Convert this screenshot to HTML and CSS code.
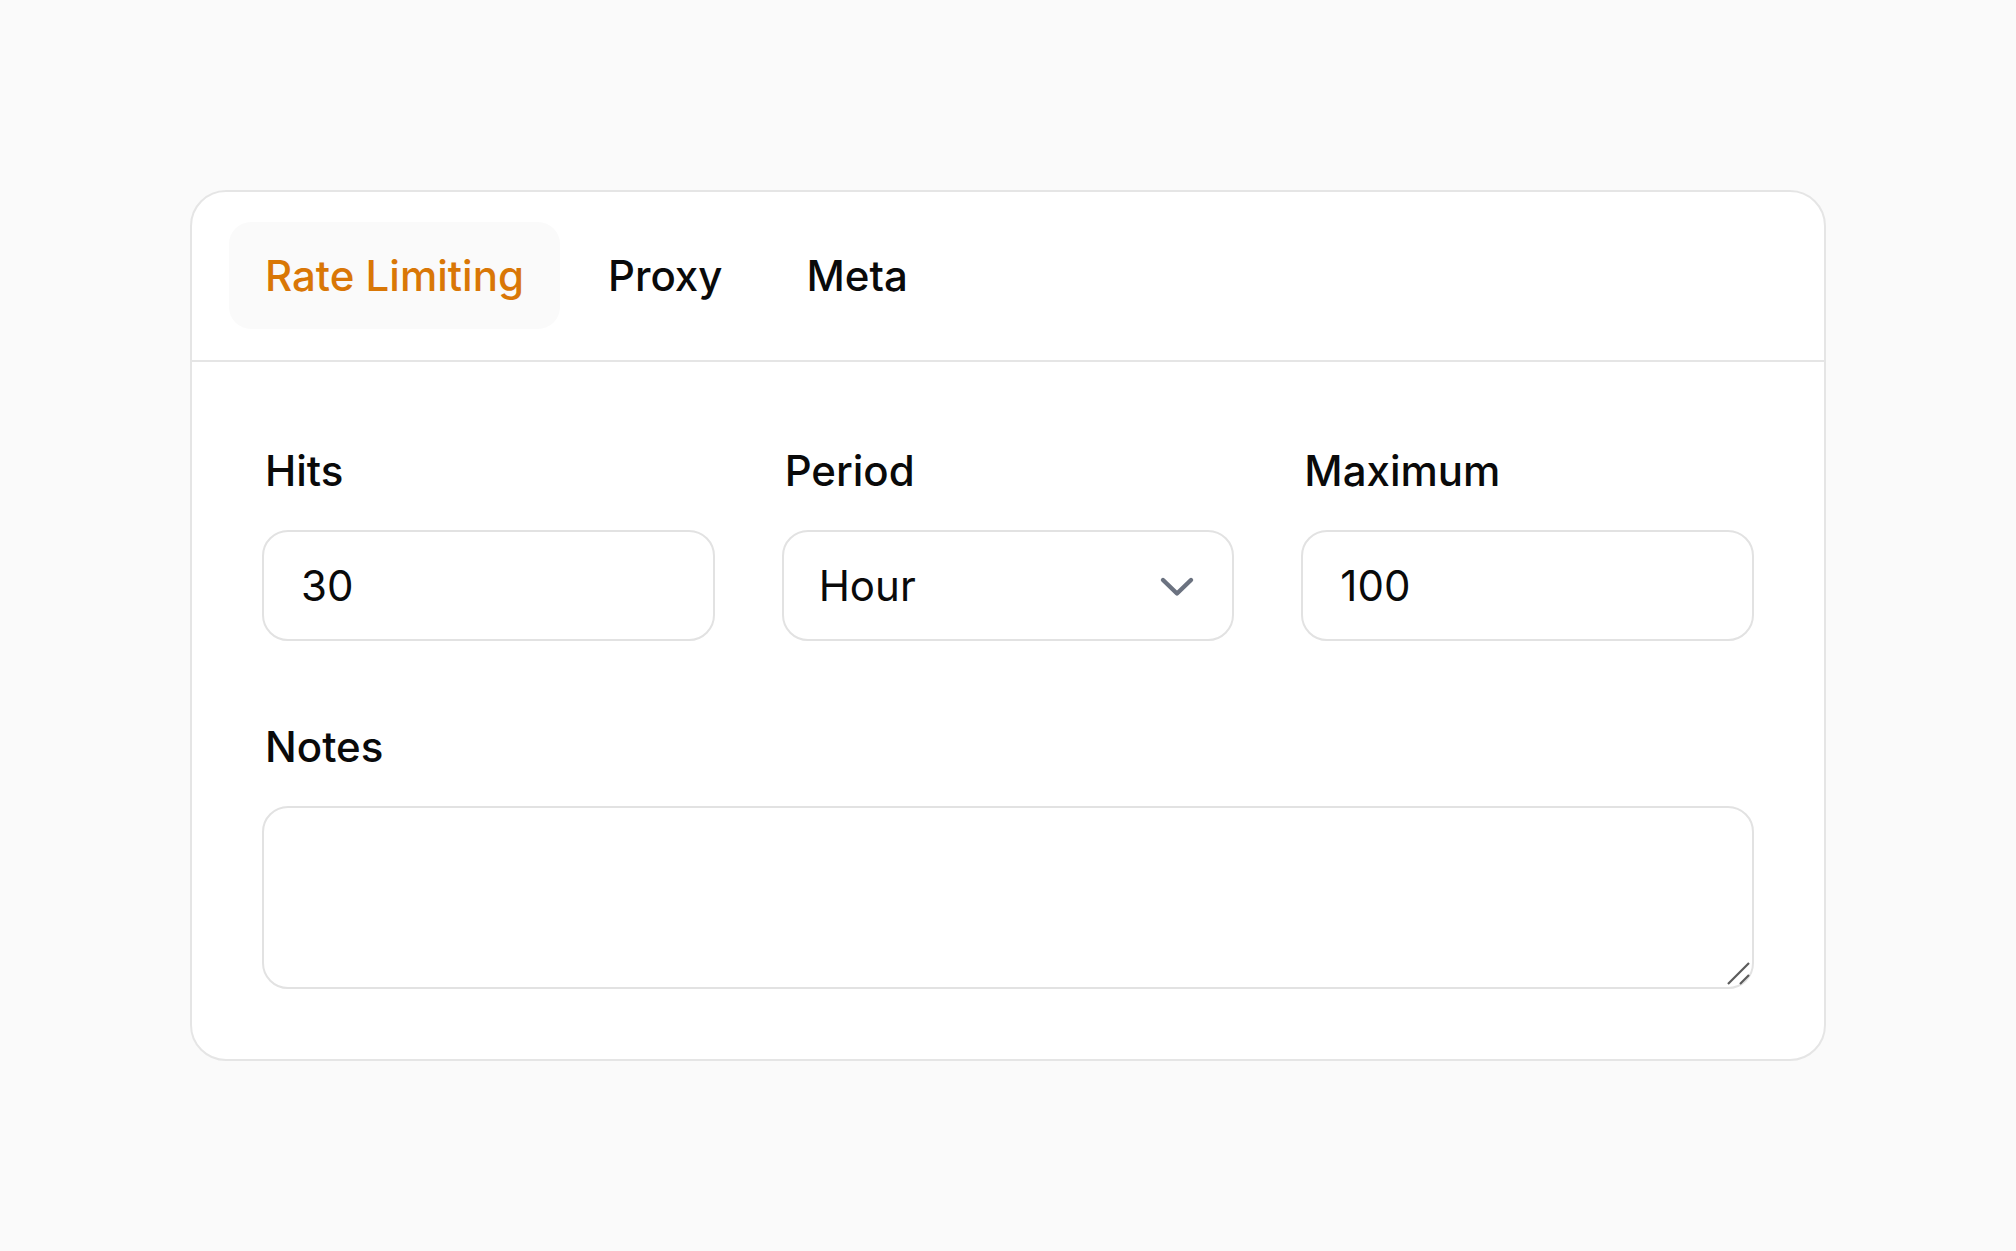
FILE: index.html
```html
<!DOCTYPE html>
<html lang="en">
<head>
<meta charset="utf-8">
<title>Rate Limiting</title>
<link rel="stylesheet" href="styles.css">
</head>
<body>
<div class="card">
  <nav class="tabs">
    <div class="tab active">Rate Limiting</div>
    <div class="tab">Proxy</div>
    <div class="tab">Meta</div>
  </nav>
  <div class="body">
    <div class="row">
      <div class="field">
        <label class="label">Hits</label>
        <input class="input" type="text" value="30">
      </div>
      <div class="field">
        <label class="label">Period</label>
        <div class="select">
          <span>Hour</span>
          <svg class="chev" width="36" height="22" viewBox="0 0 36 22"><path d="M4 4 L18 17.5 L32 4" fill="none" stroke="#6b7280" stroke-width="4.4" stroke-linecap="round" stroke-linejoin="round"/></svg>
        </div>
      </div>
      <div class="field">
        <label class="label">Maximum</label>
        <input class="input" type="text" value="100">
      </div>
    </div>
    <div class="field notes">
      <label class="label">Notes</label>
      <div class="textarea-wrap">
        <textarea class="textarea"></textarea>
        <svg class="grip" width="24" height="24" viewBox="0 0 24 24"><path d="M1 22 L22 1 M13 22 L22 13" fill="none" stroke="#5c5c5c" stroke-width="2.2"/></svg>
      </div>
    </div>
  </div>
</div>
</body>
</html>
```

FILE: styles.css
```css
* { box-sizing: border-box; }
html, body { margin: 0; padding: 0; }
body {
  background: #fafafa;
  font-family: Inter, "Noto Sans", sans-serif;
  color: #0a0a0a;
  padding-top: 190px;
}
.card {
  width: 1636px;
  margin: 0 auto;
  background: #ffffff;
  border: 2px solid #e5e5e5;
  border-radius: 36px;
}
.tabs {
  display: flex;
  gap: 12px;
  padding: 30px 37px 31px;
  border-bottom: 2px solid #e5e5e5;
}
.tab {
  font-size: 42px;
  font-weight: 500;
  line-height: 51px;
  padding: 28px 36px;
  border-radius: 22px;
  color: #0a0a0a;
}
.tab.active {
  background: #fafafa;
  color: #d97706;
}
.body {
  padding: 84px 70px 70px;
  display: flex;
  flex-direction: column;
  gap: 81px;
}
.row {
  display: grid;
  grid-template-columns: repeat(3, 1fr);
  gap: 67px;
}
.field {
  display: flex;
  flex-direction: column;
  gap: 34px;
}
.label {
  font-size: 42px;
  font-weight: 500;
  line-height: 50px;
  padding-left: 3px;
}
.input, .select, .textarea {
  width: 100%;
  border: 2px solid #e2e2e2;
  border-radius: 26px;
  background: #ffffff;
  font-family: Inter, "Noto Sans", sans-serif;
  font-size: 42px;
  color: #0a0a0a;
  outline: none;
}
.input, .select {
  height: 111px;
  padding: 0 37px;
}
.select {
  display: flex;
  align-items: center;
  justify-content: space-between;
  padding-left: 35px;
  padding-right: 37px;
}
.chev { display: block; margin-top: 2px; }
.textarea-wrap {
  position: relative;
}
.textarea {
  height: 183px;
  padding: 24px 38px;
  resize: none;
  display: block;
}
.grip {
  position: absolute;
  right: 3px;
  bottom: 3px;
  display: block;
}
```
